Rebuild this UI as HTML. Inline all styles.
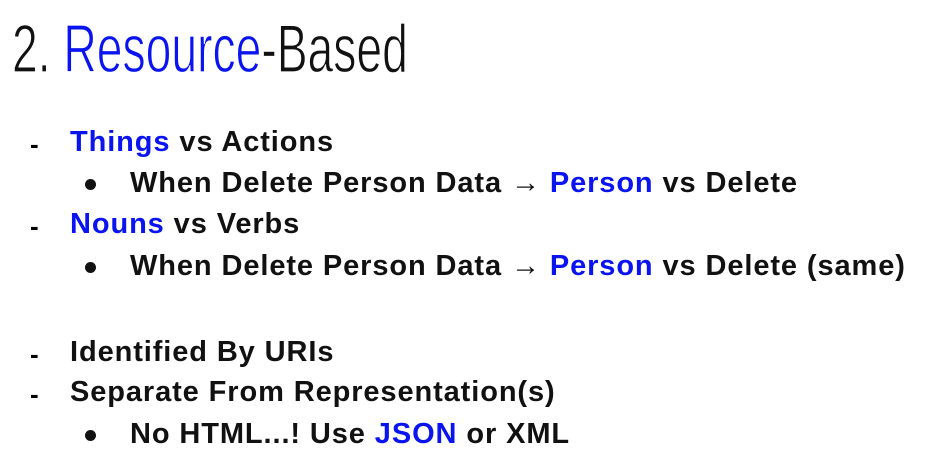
<!DOCTYPE html>
<html><head><meta charset="utf-8"><style>
body{margin:0;width:940px;height:468px;background:#fff;overflow:hidden;position:relative;font-family:"Liberation Sans",sans-serif;}
.t{position:absolute;left:12px;top:15px;font-size:68px;line-height:1;white-space:nowrap;transform:scaleX(0.68);transform-origin:0 0;color:#111;-webkit-text-stroke:1.2px #fff;}
.b{color:#0a14f0}
.t .b{-webkit-text-stroke:1.2px #fff;}
.l{position:absolute;font-weight:bold;font-size:29px;letter-spacing:0.9px;line-height:1;white-space:nowrap;color:#111;}
.d{position:absolute;left:30px;font-weight:bold;font-size:26px;line-height:1;}
.dot{position:absolute;left:85px;width:11px;height:11px;border-radius:50%;background:#111;}
</style></head><body>
<div class="t">2. <span class="b">Resource</span>-Based</div>

<div class="d" style="top:131px">-</div><div class="l" style="left:70px;top:128px"><span class="b">Things</span> vs Actions</div>
<div class="dot" style="top:179px"></div><div class="l" style="left:130px;top:169px">When Delete Person Data → <span class="b">Person</span> vs Delete</div>
<div class="d" style="top:213px">-</div><div class="l" style="left:70px;top:210px"><span class="b">Nouns</span> vs Verbs</div>
<div class="dot" style="top:262px"></div><div class="l" style="left:130px;top:252px">When Delete Person Data → <span class="b">Person</span> vs Delete (same)</div>

<div class="d" style="top:341px">-</div><div class="l" style="left:70px;top:338px">Identified By URIs</div>
<div class="d" style="top:381px">-</div><div class="l" style="left:70px;top:378px">Separate From Representation(s)</div>
<div class="dot" style="top:430px"></div><div class="l" style="left:130px;top:420px">No HTML...! Use <span class="b">JSON</span> or XML</div>
</body></html>
